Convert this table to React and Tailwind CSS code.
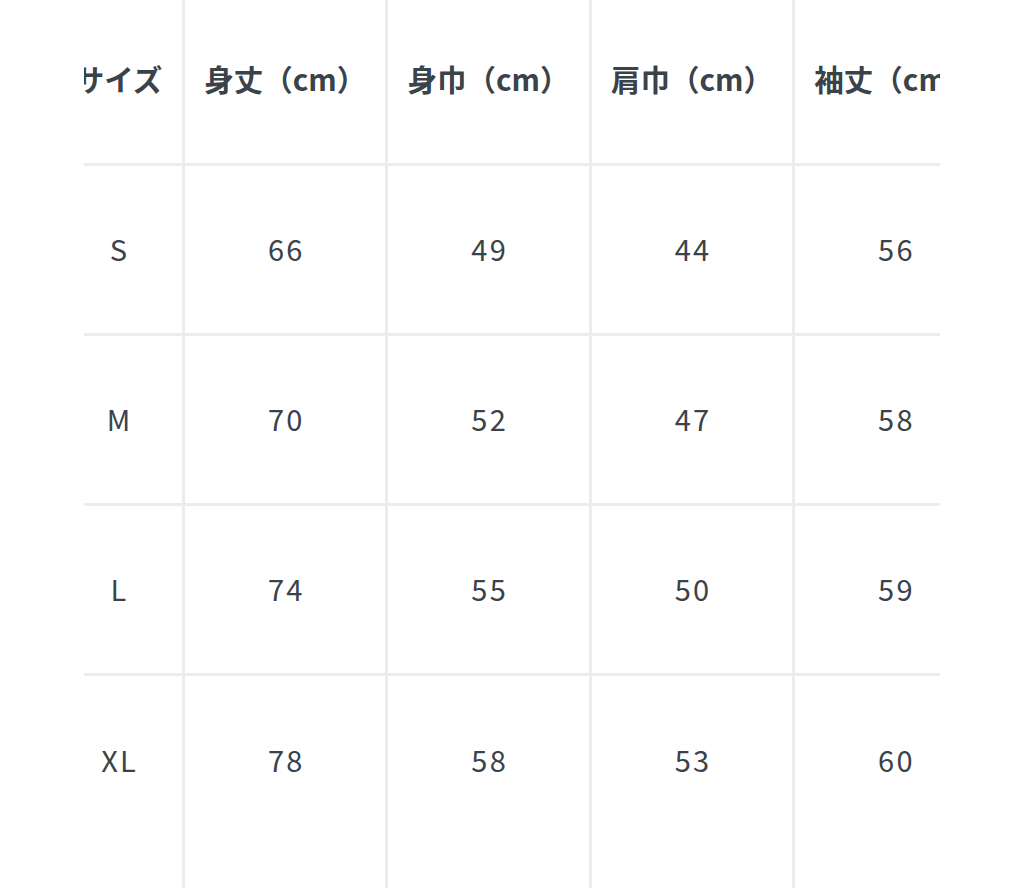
import React from "react";

const headers = ["サイズ", "身丈（cm）", "身巾（cm）", "肩巾（cm）", "袖丈（cm）"];
const rows = [
  ["S", "66", "49", "44", "56"],
  ["M", "70", "52", "47", "58"],
  ["L", "74", "55", "50", "59"],
  ["XL", "78", "58", "53", "60"],
];

const font = { fontFamily: '"Noto Sans CJK JP", "Noto Sans", sans-serif' };

function Cell({ i, children, className = "" }) {
  const w = i === 0 ? "w-[127px]" : "w-[203.4px] border-l-[3px] border-[#ececec]";
  return (
    <div className={`${w} shrink-0 flex items-center justify-center ${className}`}>
      {children}
    </div>
  );
}

export default function App() {
  return (
    <div className="w-[1024px] h-[888px] bg-white overflow-hidden" style={font}>
      <div className="ml-[84px] w-[856px] h-full overflow-hidden">
        <div className="-ml-[29px] flex flex-col h-full text-[#3a424a]">
          <div className="flex h-[166px] shrink-0 border-b-[3px] border-[#ececec]">
            {headers.map((h, i) => (
              <Cell key={i} i={i} className="text-[29.5px] font-bold whitespace-nowrap pb-[6px]">
                {h}
              </Cell>
            ))}
          </div>
          {rows.map((r, ri) => (
            <div
              key={ri}
              className={`flex h-[170px] shrink-0 ${ri < rows.length - 1 ? "border-b-[3px] border-[#ececec]" : ""}`}
            >
              {r.map((v, i) => (
                <Cell key={i} i={i} className="text-[29px] tracking-[0.08em] pl-[0.08em] pb-[2px]">
                  {v}
                </Cell>
              ))}
            </div>
          ))}
          <div className="flex flex-1">
            {headers.map((_, i) => (
              <Cell key={i} i={i} />
            ))}
          </div>
        </div>
      </div>
    </div>
  );
}
